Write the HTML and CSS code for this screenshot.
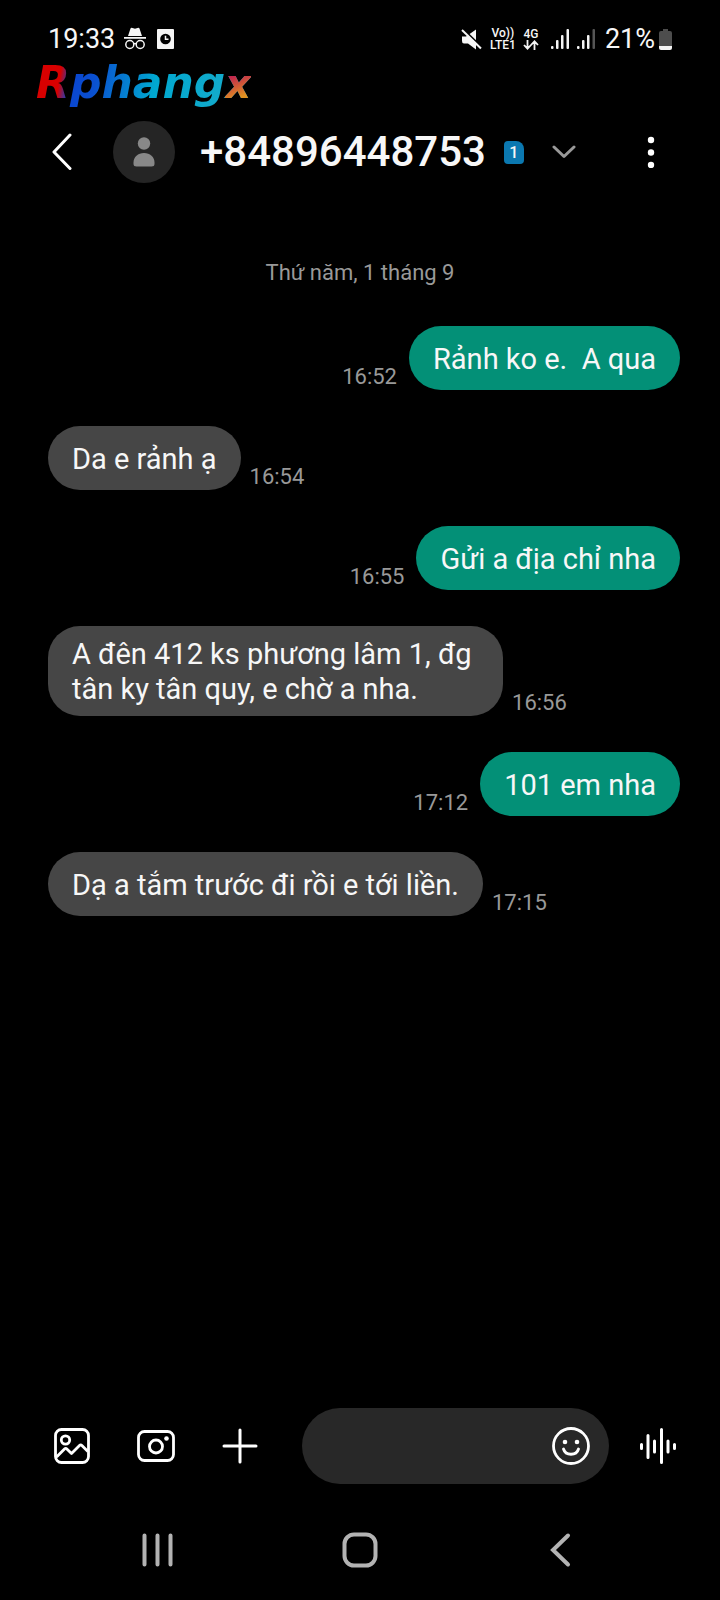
FILE: index.html
```html
<!DOCTYPE html>
<html lang="vi">
<head>
<meta charset="utf-8">
<meta name="viewport" content="width=device-width, initial-scale=1">
<title>+84896448753</title>
<link rel="stylesheet" href="styles.css">
</head>
<body>
<div class="status">
  <div class="status-side">
    <span class="clock">19:33</span>
    <svg class="incognito" width="24" height="24" viewBox="0 0 24 24" fill="#f5f5f5"><path d="M5 9 7.500 1.500Q8 .500 9.500 1L12 1.800 14.500 1Q16 .500 16.500 1.500L19 9ZM1 10h22v1.800H1Z"/><g fill="none" stroke="#f5f5f5" stroke-width="1.500"><circle cx="6.800" cy="17.500" r="4"/><circle cx="17.200" cy="17.500" r="4"/><path d="M10.800 17q1.200-.8 2.400 0"/></g></svg>
    <svg width="17" height="20" viewBox="0 0 17 20"><rect width="17" height="20" rx="1" fill="#f5f5f5"/><circle cx="8.500" cy="10" r="5.300" fill="#000"/><path d="M8.500 6.800v3.400h3" fill="none" stroke="#f5f5f5" stroke-width="1.500"/></svg>
  </div>
  <div class="status-side">
    <svg class="mute" width="21" height="21" viewBox="0 0 21 21"><path d="M1 7.500h4L15 .5v20L7 14.500H3Q1 14.500 1 12Z" fill="#f5f5f5"/><path d="M2 0 21 18.500" stroke="#000" stroke-width="2"/><path d="M1 1 20 19.500" stroke="#f5f5f5" stroke-width="2"/></svg>
    <span class="net net-volte"><span>Vo))</span><span>LTE1</span></span>
    <span class="net"><span>4G</span><svg width="16" height="10" viewBox="0 0 16 10" fill="none" stroke="#f5f5f5" stroke-width="1.800"><path d="M4.500 0v8.500M1 5l3.500 3.700L8 5M11.500 10V1.500M8 5l3.500-3.700L15 5"/></svg></span>
    <svg class="signal" width="18" height="20" viewBox="0 0 18 20" fill="#f5f5f5"><rect y="17" width="2.500" height="3" rx="1"/><rect x="5" y="11" width="2.500" height="9" rx="1"/><rect x="10" y="6" width="2.500" height="14" rx="1"/><rect x="15.500" width="2.500" height="20" rx="1"/></svg>
    <svg class="signal" width="18" height="20" viewBox="0 0 18 20" fill="#f5f5f5"><rect y="17" width="2.500" height="3" rx="1"/><rect x="5" y="11" width="2.500" height="9" rx="1"/><rect x="10" y="6" width="2.500" height="14" rx="1"/><rect x="15.500" width="2.500" height="20" rx="1" fill="#555"/></svg>
    <span class="percent">21%</span>
    <svg width="13" height="21" viewBox="0 0 13 21"><path d="M4 0h5v2h2q2 0 2 2v13H0V4q0-2 2-2h2Z" fill="#4d4d4d"/><path d="M0 17h13v2q0 2-2 2H2q-2 0-2-2Z" fill="#f5f5f5"/></svg>
  </div>
</div>

<div class="brand">Rphang<span class="brand-x">x</span></div>

<header class="header">
  <button class="icon-btn back" aria-label="Back"><svg width="20" height="38" viewBox="0 0 20 38" fill="none" stroke="#fff" stroke-width="3" stroke-linecap="round" stroke-linejoin="round"><path d="M18 2 2 19l16 16.500"/></svg></button>
  <svg class="avatar" width="62" height="62" viewBox="0 0 62 62"><circle cx="31" cy="31" r="31" fill="#252525"/><g fill="#888"><circle cx="31" cy="22.500" r="6.200"/><path d="M20.500 43v-1.500C20.500 36 25 32 31 32s10.500 4 10.500 9.500V43q0 2.500-3 2.500h-15q-3 0-3-2.500Z"/></g></svg>
  <h1 class="number">+84896448753</h1>
  <span class="sim">1</span>
  <button class="icon-btn expand" aria-label="Details"><svg width="24" height="14" viewBox="0 0 24 14" fill="none" stroke="#999" stroke-width="3" stroke-linecap="round" stroke-linejoin="round"><path d="m2 2 10 9.500L22 2"/></svg></button>
  <button class="icon-btn more" aria-label="More options"><svg width="8" height="32" viewBox="0 0 8 32" fill="#fff"><circle cx="4" cy="4" r="3.200"/><circle cx="4" cy="16.500" r="3.200"/><circle cx="4" cy="29" r="3.200"/></svg></button>
</header>

<main class="thread">
  <p class="date">Thứ năm, 1 tháng 9</p>
  <div class="row sent"><p class="bubble">Rảnh ko e.  A qua</p><time>16:52</time></div>
  <div class="row"><p class="bubble">Da e rảnh ạ</p><time>16:54</time></div>
  <div class="row sent"><p class="bubble">Gửi a địa chỉ nha</p><time>16:55</time></div>
  <div class="row"><p class="bubble">A đên 412 ks phương lâm 1, đg tân ky tân quy, e chờ a nha.</p><time>16:56</time></div>
  <div class="row sent"><p class="bubble">101 em nha</p><time>17:12</time></div>
  <div class="row"><p class="bubble">Dạ a tắm trước đi rồi e tới liền.</p><time>17:15</time></div>
</main>

<form class="composer">
  <div class="tools">
    <button type="button" class="icon-btn" aria-label="Gallery"><svg width="36" height="36" viewBox="0 0 36 36" fill="none" stroke="#fff" stroke-width="2.800" stroke-linejoin="round"><rect x="1.500" y="1.500" width="33" height="33" rx="6"/><circle cx="11.500" cy="12" r="4.200"/><path d="m2.500 29 8-8q1.200-1.200 2.400 0l4.600 4.500 8-8q1.200-1.200 2.400 0l6 6"/></svg></button>
    <button type="button" class="icon-btn" aria-label="Camera"><svg width="38" height="32" viewBox="0 0 38 32" fill="none" stroke="#fff" stroke-width="2.800"><rect x="1.500" y="1.500" width="35" height="29" rx="6"/><circle cx="19" cy="16.500" r="6.500"/><circle cx="29.500" cy="8.500" r="2.300" fill="#fff" stroke="none"/></svg></button>
    <button type="button" class="icon-btn" aria-label="Add"><svg width="36" height="36" viewBox="0 0 36 36" fill="none" stroke="#fff" stroke-width="3" stroke-linecap="round"><path d="M18 2v32M2 18h32"/></svg></button>
  </div>
  <div class="field">
    <input class="input" type="text" aria-label="Message">
    <button type="button" class="icon-btn" aria-label="Emoji"><svg width="38" height="38" viewBox="0 0 38 38" fill="none" stroke="#fff" stroke-width="2.800" stroke-linecap="round"><circle cx="19" cy="19" r="17.500"/><path d="M11.500 22c2 7 13 7 15 0"/><g fill="#fff" stroke="none"><circle cx="13" cy="15" r="2.300"/><circle cx="25" cy="15" r="2.300"/></g></svg></button>
  </div>
  <button type="button" class="icon-btn" aria-label="Voice message"><svg width="38" height="38" viewBox="0 0 38 38" fill="none" stroke="#fff" stroke-width="3" stroke-linecap="round"><path d="M2.500 17.500v4M9 8.500v22M15.500 14v11M22.500 2.500v33M29 14v11M35.500 17.500v4"/></svg></button>
</form>

<nav class="navbar">
  <button class="icon-btn" aria-label="Recent apps"><svg width="36" height="36" viewBox="0 0 36 36" fill="none" stroke="#b3b3b3" stroke-width="4" stroke-linecap="round"><path d="M4.500 3.500v29M17.500 3.500v29M30.500 3.500v29"/></svg></button>
  <button class="icon-btn" aria-label="Home"><svg width="36" height="36" viewBox="0 0 36 36" fill="none" stroke="#b3b3b3" stroke-width="4"><rect x="2.500" y="2.500" width="31" height="31" rx="9.500"/></svg></button>
  <button class="icon-btn" aria-label="Back"><svg width="36" height="36" viewBox="0 0 36 36" fill="none" stroke="#b3b3b3" stroke-width="4" stroke-linecap="round"><path d="M25 3.500 10 18l15 14.500"/></svg></button>
</nav>
</body>
</html>
```
FILE: styles.css
```css
* {
  box-sizing: border-box;
}

body {
  margin: 0;
  min-height: 100vh;
  display: flex;
  flex-direction: column;
  background: #000;
  color: #f7f7f7;
  font-family: Roboto, "Noto Sans", sans-serif;
}

h1,
p {
  margin: 0;
}

svg {
  display: block;
  flex: none;
}

.icon-btn {
  display: flex;
  align-items: center;
  justify-content: center;
  padding: 0;
  border: 0;
  background: none;
}

.status {
  display: flex;
  justify-content: space-between;
  padding: 22px 48px 4px;
}

.status-side {
  display: flex;
  align-items: center;
  height: 34px;
}

.clock,
.percent {
  font-size: 27px;
  line-height: 32px;
}

.incognito {
  margin: 0 10px 0 8px;
}

.net {
  display: flex;
  flex-direction: column;
  align-items: center;
  margin-right: 12px;
  font-size: 12px;
  line-height: 12px;
  font-weight: 500;
}

.net-volte {
  margin: 0 7px 0 8px;
}

.signal {
  margin-right: 8px;
}

.percent {
  margin: 0 4px 0 2px;
}

.brand {
  align-self: flex-start;
  margin-left: 36px;
  font: italic bold 44px/46px "DejaVu Sans", sans-serif;
  color: transparent;
  background: linear-gradient(100deg, #d80000 12%, #0a45d0 17%, #0a50d0 28%, #00a8d0 55%, #12aacb 85%);
  background-clip: text;
}

.brand-x {
  font-size: 40px;
  background: linear-gradient(160deg, #c02050 30%, #e09020 75%);
  background-clip: text;
}

.header {
  display: flex;
  align-items: center;
  height: 90px;
  padding: 0 65px 0 52px;
}

.avatar {
  margin: 0 25px 0 41px;
}

.number {
  font-size: 42px;
  line-height: 50px;
  font-weight: 500;
}

.sim {
  width: 20px;
  margin: 0 28px 0 18px;
  border-radius: 4px 8px 4px 4px;
  background: #0b78b0;
  font-size: 16px;
  line-height: 23px;
  font-weight: 500;
  text-align: center;
}

.more {
  margin-left: auto;
}

.thread {
  flex: 1;
  display: flex;
  flex-direction: column;
  gap: 36px;
  padding: 60px 40px 36px 48px;
}

.date {
  margin: 0 8px 1px 0;
  font-size: 22px;
  line-height: 32px;
  text-align: center;
  color: #999;
}

.row {
  display: flex;
  align-items: flex-end;
  gap: 9px;
}

.sent {
  flex-direction: row-reverse;
  gap: 12px;
}

.bubble {
  display: flex;
  align-items: center;
  min-height: 64px;
  max-width: 72%;
  padding: 11px 24px 9px;
  border-radius: 32px;
  background: #464646;
  font-size: 29px;
  line-height: 35px;
  white-space: pre-wrap;
}

.sent .bubble {
  background: #039077;
}

time {
  font-size: 22px;
  line-height: 26px;
  color: #999;
}

.composer {
  display: flex;
  align-items: center;
  gap: 30px;
  padding: 0 43px 0 54px;
}

.tools {
  display: flex;
  align-items: center;
  gap: 47px;
  margin-right: 14px;
}

.field {
  flex: 1;
  min-width: 0;
  display: flex;
  align-items: center;
  height: 76px;
  padding: 0 19px 0 24px;
  border-radius: 38px;
  background: #282828;
}

.input {
  flex: 1;
  min-width: 0;
  border: 0;
  outline: 0;
  background: none;
  color: #f7f7f7;
  font: 29px/35px Roboto, "Noto Sans", sans-serif;
}

.navbar {
  display: flex;
  align-items: center;
  justify-content: space-between;
  height: 100px;
  margin-top: 16px;
  padding: 0 141px 0 140px;
}
```
